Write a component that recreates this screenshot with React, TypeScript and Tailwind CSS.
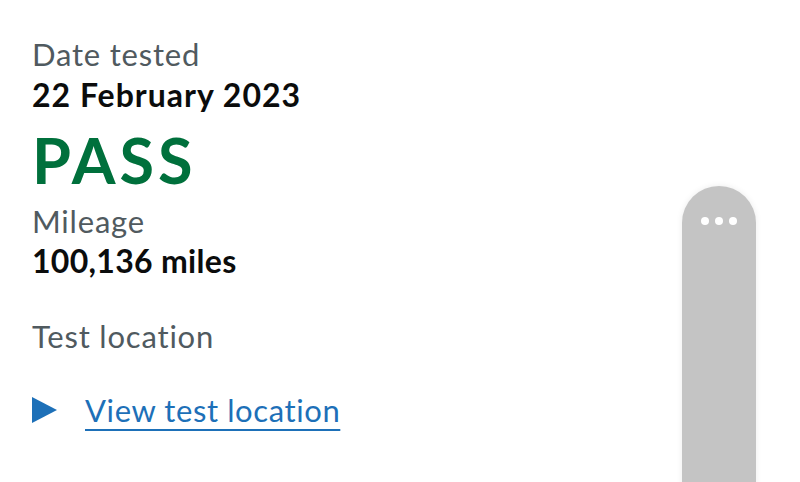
import React from "react";

export default function App() {
  return (
    <div
      className="relative w-[800px] h-[482px] overflow-hidden bg-white"
      style={{ fontFamily: "Lato, 'Noto Sans', sans-serif" }}
    >
      <div className="pl-[32px] pt-[34px] flex flex-col">
        <div className="text-[31px] leading-[40px] tracking-[0.8px] text-[#505a5f]">Date tested</div>
        <div className="text-[32px] leading-[42px] tracking-[1px] font-bold text-[#0b0c0c]">22 February 2023</div>
        <div className="mt-[6px] text-[63px] leading-[76px] tracking-[4px] font-bold text-[#00703c]">PASS</div>
        <div className="mt-[3px] text-[31px] leading-[40px] tracking-[0.8px] text-[#505a5f]">Mileage</div>
        <div className="text-[32px] leading-[40px] tracking-[0.3px] font-bold text-[#0b0c0c]">100,136 miles</div>
        <div className="mt-[35px] text-[31px] leading-[40px] tracking-[0.8px] text-[#505a5f]">Test location</div>
        <div className="mt-[34px] flex items-center gap-[28px]">
          <svg width="25" height="26" viewBox="0 0 25 26" className="shrink-0">
            <polygon points="0,0 25,13 0,26" fill="#1d70b8" />
          </svg>
          <a className="text-[31px] leading-[40px] tracking-[0.6px] text-[#1d70b8] underline decoration-[2px] underline-offset-[7px]">
            View test location
          </a>
        </div>
      </div>
      <div className="absolute left-[682px] top-[186px] w-[74px] h-[320px] rounded-t-full bg-[#c4c4c4] shadow-[0_0_6px_rgba(0,0,0,0.08)] flex justify-center pt-[31px] gap-[6px]">
        <span className="w-[8px] h-[8px] rounded-full bg-white" />
        <span className="w-[8px] h-[8px] rounded-full bg-white" />
        <span className="w-[8px] h-[8px] rounded-full bg-white" />
      </div>
    </div>
  );
}
